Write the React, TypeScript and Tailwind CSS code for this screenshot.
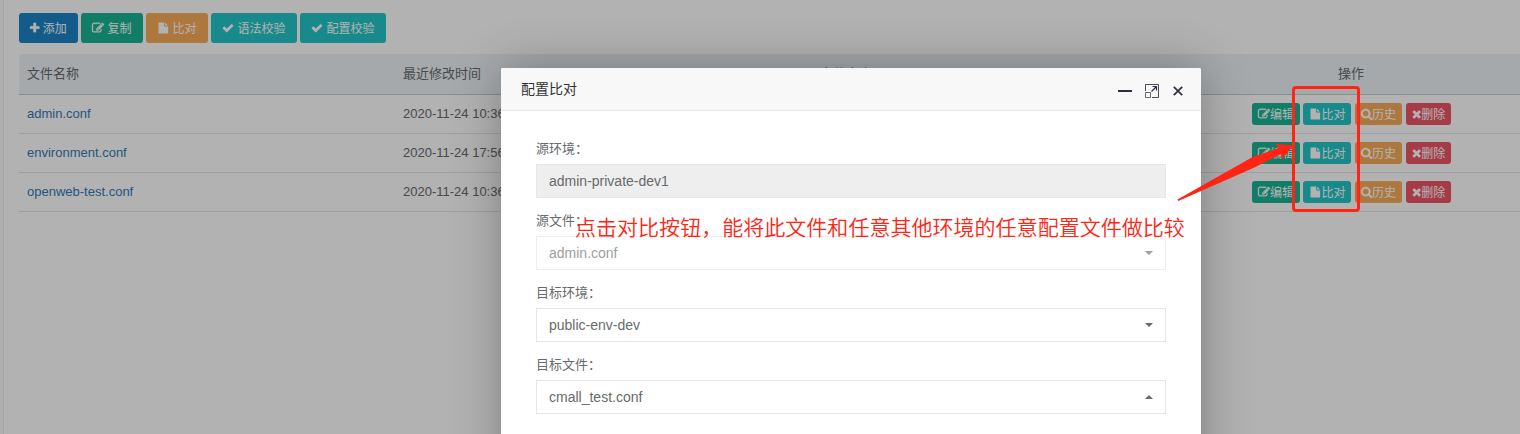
import React from "react";

const glyphs = {
  plus: {
    box: "192 0 1408 1792",
    width: "w-[9.43px]",
    d: "M1600 736v192q0 40-28 68t-68 28h-416v416q0 40-28 68t-68 28h-192q-40 0-68-28t-28-68v-416h-416q-40 0-68-28t-28-68v-192q0-40 28-68t68-28h416v-416q0-40 28-68t68-28h192q40 0 68 28t28 68v416h416q40 0 68 28t28 68z",
  },
  edit: {
    box: "0 0 1792 1792",
    width: "w-3",
    d: "M888 1184l116-116-152-152-116 116v56h96v96h56zm440-720q-16-16-33 1l-350 350q-17 17-1 33t33-1l350-350q17-17 1-33zm80 594v190q0 119-84.5 203.5t-203.5 84.5h-832q-119 0-203.5-84.5t-84.5-203.5v-832q0-119 84.5-203.5t203.5-84.5h832q63 0 117 25 15 7 18 23 3 17-9 29l-49 49q-14 14-32 8-23-6-45-6h-832q-66 0-113 47t-47 113v832q0 66 47 113t113 47h832q66 0 113-47t47-113v-126q0-13 9-22l64-64q15-15 35-7t20 29zm-96-738l288 288-672 672h-288v-288zm444 132l-92 92-288-288 92-92q28-28 68-28t68 28l152 152q28 28 28 68t-28 68z",
  },
  file: {
    box: "-110 -60 1912 1912",
    width: "w-3",
    d: "M1152 512v-472q22 14 36 28l408 408q14 14 28 36h-472zm-128 32q0 40 28 68t68 28h544v1056q0 40-28 68t-68 28h-1344q-40 0-68-28t-28-68v-1600q0-40 28-68t68-28h800v544z",
  },
  check: {
    box: "0 0 1792 1792",
    width: "w-3",
    d: "M1671 566q0 40-28 68l-724 724-136 136q-28 28-68 28t-68-28l-136-136-362-362q-28-28-28-68t28-68l136-136q28-28 68-28t68 28l294 295 656-657q28-28 68-28t68 28l136 136q28 28 28 68z",
  },
  times: {
    box: "192 0 1408 1792",
    width: "w-[9.43px]",
    d: "M1490 1322q0 40-28 68l-136 136q-28 28-68 28t-68-28l-294-294-294 294q-28 28-68 28t-68-28l-136-136q-28-28-28-68t28-68l294-294-294-294q-28-28-28-68t28-68l136-136q28-28 68-28t68 28l294 294 294-294q28-28 68-28t68 28l136 136q28 28 28 68t-28 68l-294 294 294 294q28 28 28 68z",
  },
  search: {
    box: "64 0 1664 1792",
    width: "w-[11.14px]",
    d: "M1216 832q0-185-131.5-316.5t-316.5-131.5-316.5 131.5-131.5 316.5 131.5 316.5 316.5 131.5 316.5-131.5 131.5-316.5zm512 832q0 52-38 90t-90 38q-54 0-90-38l-343-342q-179 124-399 124-143 0-273.5-55.5t-225-150-150-225-55.5-273.5 55.5-273.5 150-225 225-150 273.5-55.5 273.5 55.5 225 150 150 225 55.5 273.5q0 220-124 399l343 343q37 37 37 90z",
  },
};

type GlyphName = keyof typeof glyphs;

function Glyph({ name }: { name: GlyphName }) {
  const g = glyphs[name];
  return (
    <svg
      viewBox={g.box}
      className={`h-3 shrink-0 overflow-visible ${g.width}`}
      fill="currentColor"
      stroke="currentColor"
      strokeWidth={name === "file" ? 0 : 50}
    >
      <path d={g.d} />
    </svg>
  );
}

const toolbar: { icon: GlyphName; label: string; tone: string }[] = [
  { icon: "plus", label: "添加", tone: "w-[59px] bg-[#1c84c6]" },
  { icon: "edit", label: "复制", tone: "w-[62px] bg-[#1ab394]" },
  { icon: "file", label: "比对", tone: "w-[62px] bg-[#f8ac59]" },
  { icon: "check", label: "语法校验", tone: "w-[86px] bg-[#23c6c8]" },
  { icon: "check", label: "配置校验", tone: "w-[86px] bg-[#23c6c8]" },
];

const actions: { icon: GlyphName; label: string; tone: string }[] = [
  { icon: "edit", label: "编辑", tone: "w-12 bg-[#1ab394]" },
  { icon: "file", label: "比对", tone: "ml-[3px] w-12 pl-px bg-[#23c6c8]" },
  { icon: "search", label: "历史", tone: "ml-1 w-[47px] bg-[#f8ac59]" },
  { icon: "times", label: "删除", tone: "ml-1 w-[45px] bg-[#ed5565]" },
];

const files = [
  { name: "admin.conf", time: "2020-11-24 10:36:22" },
  { name: "environment.conf", time: "2020-11-24 17:56:08" },
  { name: "openweb-test.conf", time: "2020-11-24 10:36:22" },
];

const columns = "grid grid-cols-[376px_420px_437px_268px]";

function FilePage() {
  return (
    <div className="flex h-full bg-[#f9f9f9]">
      <div className="w-1 shrink-0 border-r border-[#eeeeee]" />
      <div className="flex-1 bg-white pt-[13px] pl-[15px]">
        <div className="flex gap-[3px]">
          {toolbar.map((b) => (
            <div
              key={b.label}
              className={`flex h-[30px] items-center justify-center gap-[3px] rounded-[3px] text-xs whitespace-nowrap text-white ${b.tone}`}
            >
              <Glyph name={b.icon} />
              <span className="pt-px">{b.label}</span>
            </div>
          ))}
        </div>
        <div className="mt-[11px] w-[1501px] text-[13px] text-[#676a6c]">
          <div className={`${columns} h-[41px] items-center rounded-tl border-b border-[#c8c8c8] bg-[#edf3f7] pb-px`}>
            <div className="pl-2">文件名称</div>
            <div className="pl-2">最近修改时间</div>
            <div className="pl-[5px]">文件大小</div>
            <div className="pl-[86px]">操作</div>
          </div>
          {files.map((f) => (
            <div key={f.name} className={`${columns} h-[39px] items-center border-b border-[#e4e4e4]`}>
              <div className="pl-2 text-[#337ab7]">{f.name}</div>
              <div className="pl-2">{f.time}</div>
              <div />
              <div className="flex">
                {actions.map((a) => (
                  <div
                    key={a.label}
                    className={`flex h-[22px] items-center justify-center rounded-[3px] text-xs whitespace-nowrap text-white ${a.tone}`}
                  >
                    <Glyph name={a.icon} />
                    <span className="pt-px">{a.label}</span>
                  </div>
                ))}
              </div>
            </div>
          ))}
        </div>
      </div>
    </div>
  );
}

const fields = [
  { label: "源环境：", value: "admin-private-dev1", box: "border-[#e5e6e7] bg-[#eee]", caret: "" },
  { label: "源文件：", value: "admin.conf", box: "border-[#e5e6e7] bg-white opacity-65", caret: "down" },
  { label: "目标环境：", value: "public-env-dev", box: "border-[#e5e6e7] bg-white", caret: "down" },
  { label: "目标文件：", value: "cmall_test.conf", box: "border-[#e5e6e7] bg-white", caret: "up" },
];

function CompareDialog() {
  return (
    <div className="absolute top-[68px] left-[501px] h-[500px] w-[700px] rounded-xs bg-white shadow-[1px_1px_50px_rgba(0,0,0,0.3)]">
      <div className="flex h-[43px] items-center justify-between rounded-t-xs border-b border-[#e7eaec] bg-[#f8f8f8] pr-[18px] pl-5 text-sm text-[#333]">
        <span>配置比对</span>
        <div className="flex items-center pt-[3px] text-[#2e2d3c]">
          <svg className="mr-[13px]" width="14" height="14" viewBox="0 0 14 14">
            <path d="M0 6h14v2H0z" fill="currentColor" />
          </svg>
          <svg className="mr-[14px]" width="14" height="14" viewBox="0 0 14 14" fill="none" stroke="currentColor">
            <path d="M0.5 7V0.5h13v13H7" strokeOpacity="0.85" />
            <path d="M0.5 8.5h5v5h-5z" strokeOpacity="0.7" />
            <path d="M6.5 7.5l5-5M7.5 2.5h4v4" strokeWidth="1.2" />
          </svg>
          <svg width="10" height="10" viewBox="0 0 10 10" stroke="currentColor" strokeWidth="1.7">
            <path d="M0.8 0.8l8.4 8.4M9.2 0.8l-8.4 8.4" />
          </svg>
        </div>
      </div>
      <div className="px-[35px] pt-[29px] text-[#676a6c]">
        {fields.map((f) => (
          <div key={f.label} className="h-[72px]">
            <div className="h-6 text-[13px] leading-[18px]">{f.label}</div>
            <div className={`flex h-[34px] items-center justify-between border px-3 text-sm ${f.box}`}>
              <span>{f.value}</span>
              {f.caret && (
                <svg width="8" height="4" viewBox="0 0 8 4" fill="currentColor">
                  <path d={f.caret === "up" ? "M0 4l4-4 4 4z" : "M0 0h8l-4 4z"} />
                </svg>
              )}
            </div>
          </div>
        ))}
      </div>
    </div>
  );
}

function Annotation() {
  return (
    <>
      <div className="absolute top-[86px] left-[1292px] h-[126px] w-[68px] rounded border-3 border-[#ff2414]" />
      <svg className="absolute top-[135px] left-[1170px]" width="130" height="75" viewBox="0 0 130 75" fill="#ff2414">
        <path d="M7.500 64.500L81.700 22.500 109 12.700 104.500 8.700 123.500 10.300 112 24.500 111 19 85 32.300 8.200 66z" />
      </svg>
      <div className="absolute top-[213px] left-[575px] text-[21px] leading-[30px] font-[350] tracking-[0.03px] whitespace-nowrap text-[#ff2414]">
        点击对比按钮，能将此文件和任意其他环境的任意配置文件做比较
      </div>
    </>
  );
}

export default function App() {
  return (
    <div className="relative h-[434px] w-[1520px] overflow-hidden font-['Liberation_Sans','Noto_Sans_CJK_SC',sans-serif]">
      <FilePage />
      <div className="absolute inset-0 bg-black/30" />
      <CompareDialog />
      <Annotation />
    </div>
  );
}
